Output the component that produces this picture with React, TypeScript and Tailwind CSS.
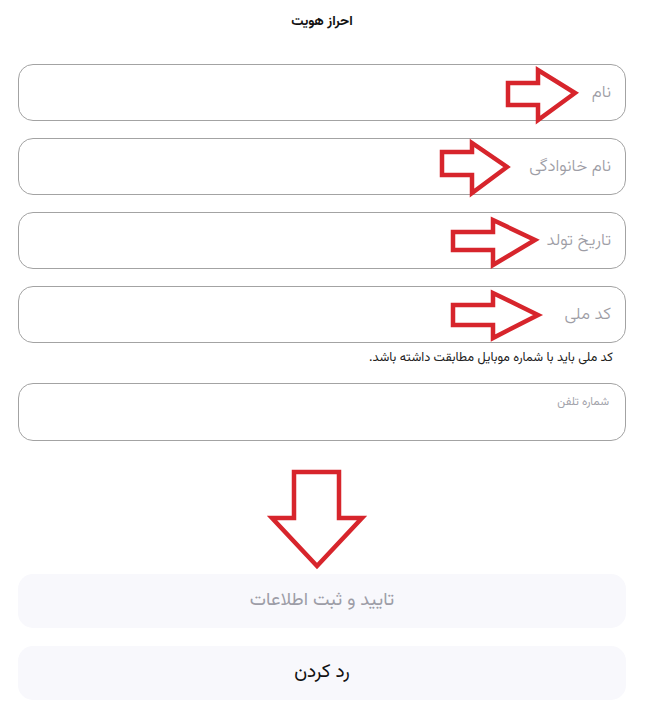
import React from "react";

const fields = ["نام", "نام خانوادگی", "تاریخ تولد", "کد ملی"];

// red hand-drawn annotation arrows, in page coordinates
const rightArrows = [
  { x0: 508, t0: 83, t1: 105, hx: 538, h0: 70, h1: 120, tx: 575, ty: 93 },
  { x0: 442, t0: 152, t1: 175, hx: 472, h0: 143, h1: 193, tx: 507, ty: 167 },
  { x0: 453, t0: 232, t1: 250, hx: 493, h0: 220, h1: 265, tx: 535, ty: 240 },
  { x0: 453, t0: 305, t1: 325, hx: 493, h0: 293, h1: 338, tx: 538, ty: 315 },
];

const Annotations: React.FC = () => (
  <svg
    className="pointer-events-none absolute left-0 top-0"
    width={652}
    height={721}
    viewBox="0 0 652 721"
    fill="none"
  >
    {rightArrows.map((a, i) => (
      <polygon
        key={i}
        points={`${a.x0},${a.t0} ${a.hx},${a.t0} ${a.hx},${a.h0} ${a.tx},${a.ty} ${a.hx},${a.h1} ${a.hx},${a.t1} ${a.x0},${a.t1}`}
        stroke="#d7252c"
        strokeWidth={4.5}
        strokeLinejoin="miter"
      />
    ))}
    <polygon
      points="294,472 339,472 339,518 362,518 317,566 272,518 294,518"
      stroke="#d7252c"
      strokeWidth={4.5}
      strokeLinejoin="miter"
    />
  </svg>
);

export default function App() {
  return (
    <div
      dir="rtl"
      className="relative min-h-[721px] w-[652px] bg-white"
      style={{ fontFamily: '"Vazirmatn", "Noto Sans Arabic", "DejaVu Sans", sans-serif' }}
    >
      <div className="pl-[18px] pr-[26px]">
        <h1 className="pt-[13px] text-center text-[13.5px] font-bold leading-[18px] text-[#111]">
          احراز هویت
        </h1>

        <div className="mt-[33px] flex flex-col gap-[17px]">
          {fields.map((f) => (
            <input
              key={f}
              placeholder={f}
              className="h-[57px] w-full rounded-[15px] border border-[#a3a3a3] bg-white px-[14px] text-[17px] font-light text-[#222] outline-none placeholder:text-[#9d9da5]"
            />
          ))}
        </div>

        <p className="mt-[7px] pr-[13px] text-[12.7px] leading-[17px] text-[#222]">
          کد ملی باید با شماره موبایل مطابقت داشته باشد.
        </p>

        <div className="mt-[16px] h-[58px] w-full rounded-[15px] border border-[#a3a3a3] px-[16px] pt-[6px]">
          <span className="text-[11.5px] leading-[16px] text-[#a3a3ab]">شماره تلفن</span>
        </div>

        <div className="mt-[133px] flex flex-col gap-[18px]">
          <button className="h-[54px] w-full rounded-[15px] bg-[#f8f8fc] text-[18.5px] text-[#9d9da7]">
            تایید و ثبت اطلاعات
          </button>
          <button className="h-[54px] w-full rounded-[15px] bg-[#f8f8fc] text-[19px] text-[#111]">
            رد کردن
          </button>
        </div>
      </div>
      <Annotations />
    </div>
  );
}
